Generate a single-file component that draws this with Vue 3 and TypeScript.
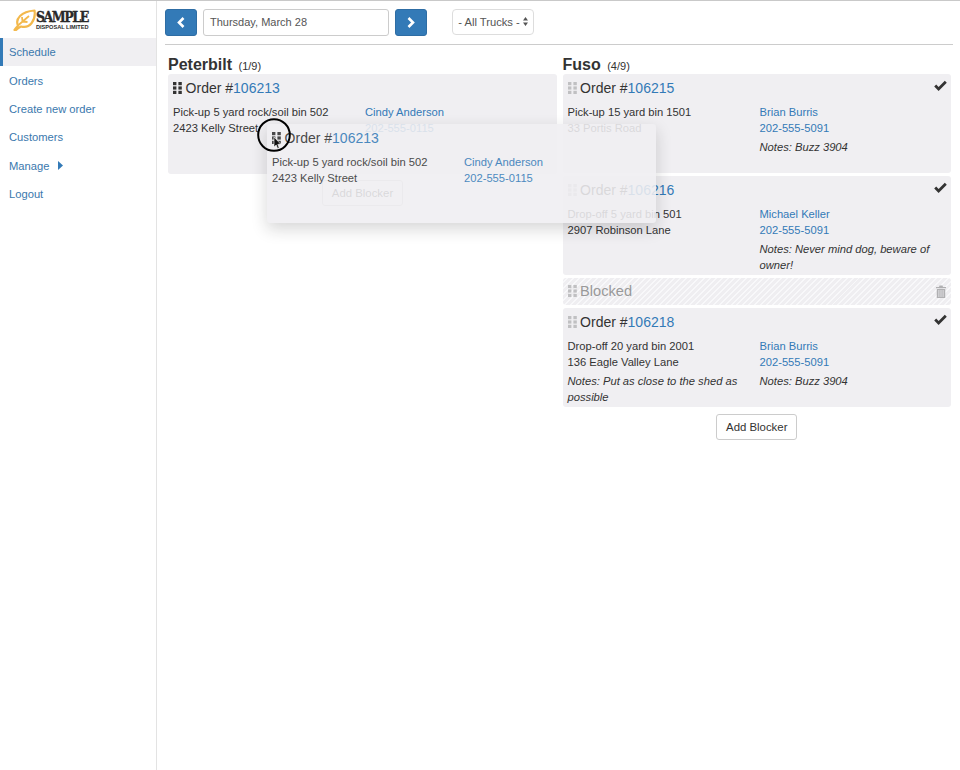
<script setup lang="ts">
interface Order {
  id: string
  line1: string
  line2: string
  name: string
  phone: string
  leftNote?: string
  rightNote?: string
}
const nav = ['Schedule', 'Orders', 'Create new order', 'Customers', 'Manage', 'Logout']
const peterbilt: Order = { id: '106213', line1: 'Pick-up 5 yard rock/soil bin 502', line2: '2423 Kelly Street', name: 'Cindy Anderson', phone: '202-555-0115' }
const first: Order[] = [
  { id: '106215', line1: 'Pick-up 15 yard bin 1501', line2: '33 Portis Road', name: 'Brian Burris', phone: '202-555-5091', rightNote: 'Notes: Buzz 3904' },
  { id: '106216', line1: 'Drop-off 5 yard bin 501', line2: '2907 Robinson Lane', name: 'Michael Keller', phone: '202-555-5091', rightNote: 'Notes: Never mind dog, beware of owner!' },
]
const last: Order = { id: '106218', line1: 'Drop-off 20 yard bin 2001', line2: '136 Eagle Valley Lane', name: 'Brian Burris', phone: '202-555-5091', leftNote: 'Notes: Put as close to the shed as possible', rightNote: 'Notes: Buzz 3904' }
const fuso: Order[] = [...first, last]
const grip = [[0, 0], [5.4, 0], [0, 4.4], [5.4, 4.4], [0, 8.8], [5.4, 8.8]]
</script>

<template>
  <div class="app">
    <aside class="side">
      <div class="logo">
        <svg class="leaf" width="23" height="22" viewBox="0 0 23 22">
          <path d="M1.5 21 C3 19 4 18 5 16.5 C2 10 8 2.5 21.5 1.5 C23 11 17 20 8 17.5 C6 18.5 4 20 2.5 21.5 Z" fill="none" stroke="#f3b94d" stroke-width="2.2" stroke-linejoin="round" />
          <path d="M5.5 16 L16 7 M9.5 12.5 L9 8 M9.5 12.5 L14.5 13" fill="none" stroke="#f3b94d" stroke-width="1.8" />
        </svg>
        <div class="logo-text">
          <div class="logo-main">SAMPLE</div>
          <div class="logo-sub">DISPOSAL LIMITED</div>
        </div>
      </div>
      <nav>
        <a v-for="(n, i) in nav" :key="n" class="nav-item" :class="{ active: i === 0 }">
          {{ n }}
          <svg v-if="n === 'Manage'" class="caret" width="5" height="9" viewBox="0 0 5 9"><path d="M0 0 L5 4.5 L0 9 Z" fill="#337ab7" /></svg>
        </a>
      </nav>
    </aside>
    <main class="main">
      <div class="toolbar">
        <button class="nav-btn">
          <svg width="8" height="11" viewBox="0 0 8 11"><path d="M6.5 1 L2 5.5 L6.5 10" fill="none" stroke="#fff" stroke-width="2.6" /></svg>
        </button>
        <div class="date">Thursday, March 28</div>
        <button class="nav-btn">
          <svg width="8" height="11" viewBox="0 0 8 11"><path d="M1.5 1 L6 5.5 L1.5 10" fill="none" stroke="#fff" stroke-width="2.6" /></svg>
        </button>
        <div class="select">
          - All Trucks -
          <svg width="5" height="9" viewBox="0 0 5 9"><path d="M2.5 0 L5 3.5 L0 3.5 Z M2.5 9 L5 5.5 L0 5.5 Z" fill="#555" /></svg>
        </div>
      </div>
      <div class="board">
        <section class="col front">
          <h2 class="truck">Peterbilt <small>(1/9)</small></h2>
          <div class="card tall">
            <div class="card-head">
              <svg class="grip" width="9" height="12" viewBox="0 0 9 12"><rect v-for="g in grip" :key="g.join()" :x="g[0]" :y="g[1]" width="3.4" height="3.2" fill="#333" /></svg>
              <span>Order #<a>{{ peterbilt.id }}</a></span>
            </div>
            <div class="card-body">
              <div>
                <div>{{ peterbilt.line1 }}</div>
                <div>{{ peterbilt.line2 }}</div>
              </div>
              <div>
                <a class="block">{{ peterbilt.name }}</a>
                <a class="block">{{ peterbilt.phone }}</a>
              </div>
            </div>
          </div>
          <button class="add">Add Blocker</button>
          <div class="card ghost">
            <div class="card-head">
              <svg class="grip" width="9" height="12" viewBox="0 0 9 12"><rect v-for="g in grip" :key="g.join()" :x="g[0]" :y="g[1]" width="3.4" height="3.2" fill="#333" /></svg>
              <span>Order #<a>{{ peterbilt.id }}</a></span>
            </div>
            <div class="card-body">
              <div>
                <div>{{ peterbilt.line1 }}</div>
                <div>{{ peterbilt.line2 }}</div>
              </div>
              <div>
                <a class="block">{{ peterbilt.name }}</a>
                <a class="block">{{ peterbilt.phone }}</a>
              </div>
            </div>
          </div>
          <div class="pointer">
            <svg width="36" height="36" viewBox="0 0 36 36">
              <circle cx="17" cy="17" r="15.8" fill="none" stroke="#000" stroke-width="2" />
              <path d="M17 19 L17 29 L19.2 27 L20.6 30.5 L22.2 29.7 L20.8 26.4 L23.6 26 Z" fill="#111" stroke="#fff" stroke-width=".6" />
            </svg>
          </div>
        </section>
        <section class="col">
          <h2 class="truck">Fuso <small>(4/9)</small></h2>
          <div class="stack">
            <template v-for="o in fuso" :key="o.id">
              <div v-if="o.id === '106218'" class="blocked">
                <svg class="grip" width="9" height="12" viewBox="0 0 9 12"><rect v-for="g in grip" :key="g.join()" :x="g[0]" :y="g[1]" width="3.4" height="3.2" fill="#c0c0c2" /></svg>
                <span>Blocked</span>
                <svg class="trash" width="10" height="13" viewBox="0 0 10 13">
                  <path d="M3.5 0.5 H6.5 L7 2 H10 V3.2 H0 V2 H3 Z M0.8 4 H9.2 V13 H0.8 Z" fill="#b0b0b2" />
                  <path d="M2.9 5 V12 M5 5 V12 M7.1 5 V12" stroke="#efeef1" stroke-width=".8" />
                </svg>
              </div>
              <div class="card fuso-card">
                <div class="card-head">
                  <svg class="grip" width="9" height="12" viewBox="0 0 9 12"><rect v-for="g in grip" :key="g.join()" :x="g[0]" :y="g[1]" width="3.4" height="3.2" fill="#c0c0c2" /></svg>
                  <span>Order #<a>{{ o.id }}</a></span>
                  <svg class="check" width="13" height="11" viewBox="0 0 13 11"><path d="M1.2 5.6 L4.6 9 L11.8 1.8" fill="none" stroke="#333" stroke-width="2.8" /></svg>
                </div>
                <div class="card-body">
                  <div>
                    <div>{{ o.line1 }}</div>
                    <div>{{ o.line2 }}</div>
                    <div v-if="o.leftNote" class="note">{{ o.leftNote }}</div>
                  </div>
                  <div>
                    <a class="block">{{ o.name }}</a>
                    <a class="block">{{ o.phone }}</a>
                    <div v-if="o.rightNote" class="note">{{ o.rightNote }}</div>
                  </div>
                </div>
              </div>
            </template>
          </div>
          <button class="add">Add Blocker</button>
        </section>
      </div>
    </main>
  </div>
</template>

<style>
html, body { margin: 0; background: #fff; }
</style>

<style scoped>
.app {
  display: flex;
  min-height: 770px;
  box-sizing: border-box;
  border-top: 1px solid #c9c9c9;
  font-family: "Liberation Sans", Arial, sans-serif;
  font-size: 11.2px;
  line-height: 16px;
  color: #333;
}
a { color: #337ab7; }
.block { display: block; }
.side {
  width: 157px;
  flex: none;
  box-sizing: border-box;
  border-right: 1px solid #e3e3e3;
}
.logo {
  height: 37px;
  box-sizing: border-box;
  padding: 8px 0 0 13px;
  display: flex;
  gap: 0;
}
.leaf { flex: none; }
.logo-text { color: #2a2a2a; width: 54px; padding-top: 2px; }
.logo-main {
  font-family: "DejaVu Serif", serif;
  font-weight: 700;
  font-stretch: condensed;
  font-size: 14px;
  line-height: 12px;
  letter-spacing: -1.5px;
  white-space: nowrap;
  -webkit-text-stroke: 0.3px #2a2a2a;
}
.logo-sub {
  font-family: "Liberation Sans", sans-serif;
  font-weight: 700;
  font-size: 5.6px;
  line-height: 7px;
  margin-top: 1px;
  white-space: nowrap;
}
.nav-item {
  display: flex;
  align-items: center;
  gap: 6px;
  height: 28.4px;
  box-sizing: border-box;
  padding-left: 9px;
  color: #3a78ad;
}
.nav-item.active {
  background: #f0eff2;
  border-left: 3px solid #337ab7;
  padding-left: 6px;
}
.caret { margin-left: 3px; }
.main {
  flex: 1;
  padding: 8px 7px 0 8px;
  min-width: 0;
}
.toolbar {
  display: flex;
  align-items: center;
  height: 27px;
  padding-bottom: 8px;
  border-bottom: 1px solid #ccc;
}
.nav-btn {
  width: 32px;
  height: 27px;
  padding: 0;
  border: 1px solid #2e6da4;
  border-radius: 3px;
  background: #337ab7;
  display: flex;
  align-items: center;
  justify-content: center;
}
.date {
  width: 186px;
  height: 27px;
  box-sizing: border-box;
  margin: 0 6px;
  padding: 0 6px;
  border: 1px solid #ccc;
  border-radius: 3px;
  line-height: 25px;
  font-size: 11px;
  color: #555;
}
.select {
  margin-left: 25px;
  margin-top: -2px;
  width: 82px;
  height: 26px;
  box-sizing: border-box;
  border: 1px solid #ddd;
  border-radius: 4px;
  display: flex;
  align-items: center;
  justify-content: center;
  gap: 3px;
  color: #555;
}
.board {
  display: grid;
  grid-template-columns: 389px 388.5px;
  gap: 5.5px;
  padding-left: 3px;
}
.col {
  position: relative;
  display: flex;
  flex-direction: column;
  align-items: center;
}
.front { z-index: 2; }
.truck {
  align-self: flex-start;
  margin: 12px 0 0;
  font-size: 16px;
  line-height: 16px;
  font-weight: 700;
  color: #333;
}
.truck small {
  font-size: 11px;
  font-weight: 400;
  margin-left: 2px;
}
.stack {
  width: 100%;
  display: flex;
  flex-direction: column;
  gap: 3px;
}
.card {
  width: 100%;
  min-height: 99px;
  box-sizing: border-box;
  padding: 3px 5px 1px;
  background: #f0eff2;
  border-radius: 3px;
}
.fuso-card { padding-right: 4px; }
.tall { min-height: 99.5px; }
.card-head {
  display: flex;
  align-items: center;
  height: 22px;
  margin-bottom: 5px;
  font-size: 14px;
  line-height: 20px;
}
.grip { margin-right: 3.6px; flex: none; }
.check { margin-left: auto; margin-top: -6px; }
.card-body {
  display: grid;
  grid-template-columns: 192px 1fr;
}
.card-body > div:first-child { padding-right: 12px; }
.note { font-style: italic; margin-top: 2.5px; }
.blocked {
  height: 27px;
  box-sizing: border-box;
  padding: 0 5px 1px;
  display: flex;
  align-items: center;
  border-radius: 3px;
  font-size: 14.6px;
  color: #999;
  background: repeating-linear-gradient(135deg, #efeef1 0 2.8px, #f8f8fa 2.8px 4.2px);
}
.trash { margin-left: auto; }
.add {
  margin-top: 6.5px;
  width: 81px;
  height: 26px;
  padding: 0;
  background: #fff;
  border: 1px solid #ccc;
  border-radius: 3px;
  font: 11.4px "Liberation Sans", Arial, sans-serif;
  color: #333;
}
.ghost {
  position: absolute;
  left: 99px;
  top: 79px;
  opacity: 0.88;
  box-shadow: 0 6px 16px rgba(0, 0, 0, 0.18);
}
.pointer {
  position: absolute;
  left: 89px;
  top: 73px;
  width: 36px;
  height: 36px;
}
</style>
